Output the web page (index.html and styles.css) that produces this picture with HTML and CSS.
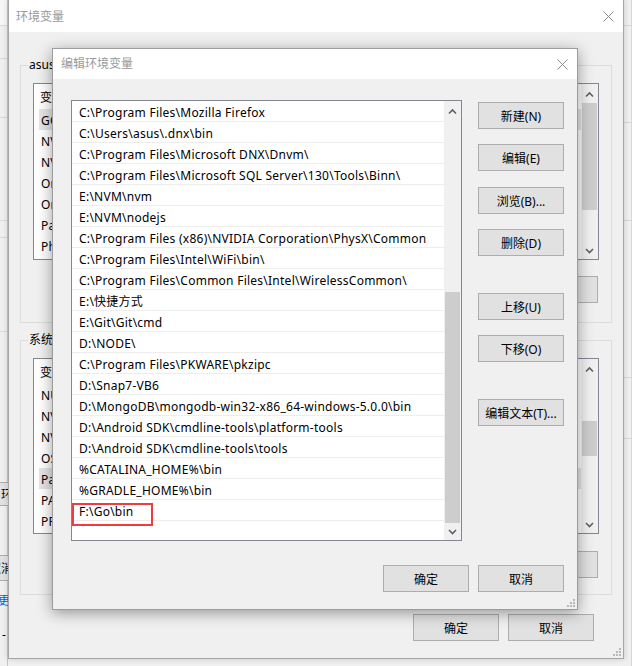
FILE: index.html
```html
<!DOCTYPE html>
<html lang="zh-CN">
<head>
<meta charset="utf-8">
<title>编辑环境变量</title>
<link rel="stylesheet" href="styles.css">
</head>
<body>
<div class="desktop">

  <div class="win back-left">
    <div class="bl-title"></div>
    <div class="bl-line h32"></div>
    <div class="bl-line h58"></div>
    <div class="bl-line h102"></div>
    <div class="bl-line h16"></div>
    <div class="bl-line h93"></div>
    <button class="btn bl-btn bl-env">环境变量(N)...</button>
    <button class="btn bl-btn bl-cancel">取消</button>
    <div class="bl-link">更改</div>
    <div class="bl-dash">-</div>
  </div>

  <div class="back-right">
    <div class="br-line h25"></div>
    <div class="br-line h96"></div>
    <div class="br-line h97"></div>
    <div class="br-line h156"></div>
    <div class="br-line h60"></div>
  </div>

  <div class="win env">
    <div class="titlebar env-title">
      <span class="title">环境变量</span>
      <svg class="close" width="11" height="11" viewBox="0 0 11 11"><path d="M0.5 0.5L10.5 10.5M10.5 0.5L0.5 10.5" stroke="#8c8c8c" stroke-width="1"/></svg>
    </div>
    <div class="env-body">
      <div class="group g-user">
        <span class="legend">asus 的用户变量(U)</span>
        <div class="lv lv-user">
          <div class="lv-rows">
            <div class="lv-head"><span class="c1">变量</span></div>
            <div class="lv-row sel"><span class="c1">GOPATH</span></div>
            <div class="lv-row"><span class="c1">NVM_HOME</span></div>
            <div class="lv-row"><span class="c1">NVM_SYMLINK</span></div>
            <div class="lv-row"><span class="c1">OneDrive</span></div>
            <div class="lv-row"><span class="c1">OneDriveConsumer</span></div>
            <div class="lv-row"><span class="c1">Path</span></div>
            <div class="lv-row"><span class="c1">PhpStorm</span></div>
          </div>
          <div class="vscroll">
            <div class="sb-btn"><svg width="17" height="17" viewBox="0 0 17 17"><path d="M5 12.5L8.5 9L12 12.5" fill="none" stroke="#606060" stroke-width="1.6"/></svg></div>
            <div class="thumb th-user"></div>
            <div class="sb-fill"></div>
            <div class="sb-btn"><svg width="17" height="17" viewBox="0 0 17 17"><path d="M5 7L8.5 10.5L12 7" fill="none" stroke="#606060" stroke-width="1.6"/></svg></div>
          </div>
        </div>
        <div class="btnrow">
          <button class="btn">新建(N)...</button>
          <button class="btn">编辑(E)...</button>
          <button class="btn">删除(D)</button>
        </div>
      </div>

      <div class="group g-sys">
        <span class="legend">系统变量(S)</span>
        <div class="lv lv-sys">
          <div class="lv-rows">
            <div class="lv-head"><span class="c1">变量</span></div>
            <div class="lv-row"><span class="c1">NUMBER_OF_PROCESSORS</span></div>
            <div class="lv-row"><span class="c1">NVM_HOME</span></div>
            <div class="lv-row"><span class="c1">NVM_SYMLINK</span></div>
            <div class="lv-row"><span class="c1">OS</span></div>
            <div class="lv-row sel"><span class="c1">Path</span></div>
            <div class="lv-row"><span class="c1">PATHEXT</span></div>
            <div class="lv-row"><span class="c1">PROCESSOR_ARCHITECTURE</span></div>
          </div>
          <div class="vscroll">
            <div class="sb-btn"><svg width="17" height="17" viewBox="0 0 17 17"><path d="M5 12.5L8.5 9L12 12.5" fill="none" stroke="#606060" stroke-width="1.6"/></svg></div>
            <div class="thumb th-sys"></div>
            <div class="sb-fill"></div>
            <div class="sb-btn"><svg width="17" height="17" viewBox="0 0 17 17"><path d="M5 7L8.5 10.5L12 7" fill="none" stroke="#606060" stroke-width="1.6"/></svg></div>
          </div>
        </div>
        <div class="btnrow sys-btns">
          <button class="btn">新建(W)...</button>
          <button class="btn">编辑(I)...</button>
          <button class="btn">删除(L)</button>
        </div>
      </div>

      <div class="foot env-foot">
        <button class="btn">确定</button>
        <button class="btn">取消</button>
      </div>
    </div>
    <svg class="grip" width="10" height="10" viewBox="0 0 10 10"><path d="M7 1h2v2H7zM4 4h2v2H4zM7 4h2v2H7zM1 7h2v2H1zM4 7h2v2H4zM7 7h2v2H7z" fill="#b8b8b8"/></svg>
  </div>

  <div class="win edit">
    <div class="titlebar edit-title">
      <span class="title">编辑环境变量</span>
      <svg class="close" width="11" height="11" viewBox="0 0 11 11"><path d="M0.5 0.5L10.5 10.5M10.5 0.5L0.5 10.5" stroke="#8c8c8c" stroke-width="1"/></svg>
    </div>
    <div class="edit-body">
      <div class="elist">
        <div class="erows">
          <div class="erow">C:\Program Files\Mozilla Firefox</div>
          <div class="erow">C:\Users\asus\.dnx\bin</div>
          <div class="erow">C:\Program Files\Microsoft DNX\Dnvm\</div>
          <div class="erow">C:\Program Files\Microsoft SQL Server\130\Tools\Binn\</div>
          <div class="erow">E:\NVM\nvm</div>
          <div class="erow">E:\NVM\nodejs</div>
          <div class="erow">C:\Program Files (x86)\NVIDIA Corporation\PhysX\Common</div>
          <div class="erow">C:\Program Files\Intel\WiFi\bin\</div>
          <div class="erow">C:\Program Files\Common Files\Intel\WirelessCommon\</div>
          <div class="erow">E:\快捷方式</div>
          <div class="erow">E:\Git\Git\cmd</div>
          <div class="erow">D:\NODE\</div>
          <div class="erow">C:\Program Files\PKWARE\pkzipc</div>
          <div class="erow">D:\Snap7-VB6</div>
          <div class="erow">D:\MongoDB\mongodb-win32-x86_64-windows-5.0.0\bin</div>
          <div class="erow">D:\Android SDK\cmdline-tools\platform-tools</div>
          <div class="erow">D:\Android SDK\cmdline-tools\tools</div>
          <div class="erow">%CATALINA_HOME%\bin</div>
          <div class="erow">%GRADLE_HOME%\bin</div>
          <div class="erow">F:\Go\bin</div>
        </div>
        <div class="vscroll">
          <div class="sb-btn"><svg width="17" height="17" viewBox="0 0 17 17"><path d="M5 12.5L8.5 9L12 12.5" fill="none" stroke="#606060" stroke-width="1.6"/></svg></div>
          <div class="thumb th-edit"></div>
          <div class="sb-fill"></div>
          <div class="sb-btn"><svg width="17" height="17" viewBox="0 0 17 17"><path d="M5 7L8.5 10.5L12 7" fill="none" stroke="#606060" stroke-width="1.6"/></svg></div>
        </div>
      </div>
      <div class="ebtns">
        <button class="btn">新建(N)</button>
        <button class="btn">编辑(E)</button>
        <button class="btn b-browse">浏览(B)...</button>
        <button class="btn">删除(D)</button>
        <button class="btn b-far">上移(U)</button>
        <button class="btn">下移(O)</button>
        <button class="btn b-far">编辑文本(T)...</button>
      </div>
    </div>
    <div class="foot edit-foot">
      <button class="btn">确定</button>
      <button class="btn">取消</button>
    </div>
    <svg class="grip" width="10" height="10" viewBox="0 0 10 10"><path d="M7 1h2v2H7zM4 4h2v2H4zM7 4h2v2H7zM1 7h2v2H1zM4 7h2v2H4zM7 7h2v2H7z" fill="#b8b8b8"/></svg>
  </div>

  <div class="annot"></div>
</div>
</body>
</html>
```

FILE: styles.css
```css
html, body {
  margin: 0;
  padding: 0;
  background: #f0f0f0;
}

.desktop {
  position: relative;
  width: 632px;
  height: 666px;
  overflow: hidden;
  background: #f0f0f0;
  font-family: "Noto Sans", "Noto Sans CJK SC", sans-serif;
  font-size: 12px;
  color: #000;
}

.btn {
  box-sizing: border-box;
  width: 86px;
  height: 27px;
  padding: 0;
  border: 1px solid #adadad;
  background: #e1e1e1;
  font: inherit;
  color: #000;
  display: flex;
  align-items: center;
  justify-content: center;
  white-space: nowrap;
  overflow: hidden;
  flex: none;
}

.win {
  position: absolute;
  box-sizing: border-box;
  background: #f0f0f0;
  border: 1px solid #a6a6a6;
  display: flex;
  flex-direction: column;
}

/* back window on the left (only a sliver is visible) */
.back-left {
  left: -100px;
  top: -1px;
  width: 108px;
  height: 668px;
  border-color: #c8c8c8;
}
.bl-title {
  height: 25px;
  background: #f7f7f7;
  border-bottom: 1px solid #d9d9d9;
  flex: none;
}
.bl-line {
  border-bottom: 1px solid #d9d9d9;
  flex: none;
}
.h32 { height: 32px; }
.h58 { height: 58px; }
.h102 { height: 102px; }
.h16 { height: 16px; }
.h93 { height: 93px; }

.bl-btn {
  justify-content: flex-start;
  margin: 0 0 0 80px;
  width: 110px;
}
.bl-env {
  margin-top: 150px;
  padding-left: 19px;
  height: 24px;
}
.bl-cancel {
  margin-top: 49px;
  padding-left: 7px;
  height: 26px;
}
.bl-link {
  margin-top: 10px;
  margin-left: 97px;
  color: #0066cc;
  white-space: nowrap;
}
.bl-dash {
  margin-top: 17px;
  margin-left: 101px;
}

/* back window on the right */
.back-right {
  position: absolute;
  left: 624px;
  top: 0;
  width: 8px;
  height: 666px;
  border-right: 1px solid #d6d6d6;
  box-sizing: border-box;
  display: flex;
  flex-direction: column;
}
.br-line {
  border-bottom: 1px solid #d6d6d6;
  flex: none;
}
.h25 { height: 25px; }
.h96 { height: 96px; }
.h97 { height: 97px; }
.h156 { height: 156px; }
.h60 { height: 60px; }

/* main env window */
.env {
  left: 8px;
  top: -1px;
  width: 616px;
  height: 660px;
  box-shadow: 0 0 6px rgba(0, 0, 0, 0.18);
}

.titlebar {
  flex: none;
  background: #fff;
  display: flex;
  align-items: center;
  justify-content: space-between;
  color: #9a9a9a;
}
.env-title {
  box-sizing: border-box;
  height: 32px;
  padding: 1px 9px 0 7px;
}
.edit-title {
  height: 30px;
  padding: 0 9px 0 8px;
}
.title {
  line-height: 16px;
}
.close {
  display: block;
}

.env-body {
  padding: 0 11px;
  display: flex;
  flex-direction: column;
}

.group {
  position: relative;
  border: 1px solid #dcdcdc;
  padding: 17px 12px 19px;
}
.g-user {
  margin-top: 33px;
}
.g-sys {
  margin-top: 17px;
  padding-bottom: 16px;
}
.legend {
  position: absolute;
  top: -9px;
  left: 7px;
  padding: 0 1px;
  background: #f0f0f0;
  line-height: 16px;
  white-space: nowrap;
}

.lv {
  box-sizing: border-box;
  display: flex;
  border: 1px solid #828790;
  background: #fff;
}
.lv-user { height: 177px; }
.lv-sys { height: 176px; }

.lv-rows {
  flex: 1;
  overflow: hidden;
  display: flex;
  flex-direction: column;
}
.lv-head {
  flex: none;
  height: 25px;
  display: flex;
  align-items: center;
  padding-left: 6px;
  white-space: nowrap;
}
.lv-row {
  flex: none;
  box-sizing: border-box;
  height: 21px;
  display: flex;
  align-items: center;
  margin-left: 5px;
  padding: 1px 0 0 2px;
  white-space: nowrap;
  letter-spacing: 0.25px;
}
.lv-row.sel {
  background: #e5e5e5;
}
.c1 {
  width: 160px;
  flex: none;
}

.vscroll {
  flex: none;
  width: 17px;
  background: #f0f0f0;
  display: flex;
  flex-direction: column;
}
.sb-btn {
  flex: none;
  height: 17px;
}
.sb-btn svg {
  display: block;
}
.sb-fill {
  flex: 1;
}
.thumb {
  flex: none;
  margin: 0 1px;
  background: #cdcdcd;
}
.th-user { margin-top: 2px; height: 107px; }
.th-sys { margin-top: 45px; height: 35px; }
.th-edit { margin-top: 174px; height: 231px; }

.btnrow {
  display: flex;
  justify-content: flex-end;
  gap: 9px;
  margin-top: 16px;
  padding-right: 1px;
}
.sys-btns {
  margin-top: 17px;
}

.foot {
  display: flex;
  justify-content: flex-end;
  gap: 9px;
}
.env-foot {
  margin-top: 19px;
  padding-right: 18px;
}

.grip {
  position: absolute;
  right: 1px;
  bottom: 1px;
}

/* edit dialog */
.edit {
  left: 52px;
  top: 48px;
  width: 526px;
  height: 562px;
  border-color: #9c9c9c;
  box-shadow: 0 3px 14px rgba(0, 0, 0, 0.38);
}
.edit-body {
  display: flex;
  align-items: flex-start;
  gap: 16px;
  padding: 21px 13px 0 18px;
}
.elist {
  box-sizing: border-box;
  width: 391px;
  height: 441px;
  flex: none;
  display: flex;
  border: 1px solid #828790;
  background: #fff;
}
.erows {
  flex: 1;
  overflow: hidden;
  display: flex;
  flex-direction: column;
}
.erow {
  flex: none;
  box-sizing: border-box;
  height: 21px;
  border-bottom: 1px solid #ededed;
  padding: 2px 0 0 7px;
  display: flex;
  align-items: center;
  white-space: nowrap;
  overflow: hidden;
  letter-spacing: 0.25px;
}
.ebtns {
  display: flex;
  flex-direction: column;
  gap: 15px;
  padding-top: 2px;
}
.ebtns .btn {
  margin: 0;
}
.ebtns .b-browse { margin-top: 1px; }
.ebtns .b-far { margin-top: 22px; }

.edit-foot {
  margin-top: 24px;
  padding-right: 13px;
}
.foot .btn {
  margin: 0;
}

.annot {
  position: absolute;
  left: 72px;
  top: 503px;
  width: 81px;
  height: 23px;
  box-sizing: border-box;
  border: 2px solid #f03c3c;
}
```
